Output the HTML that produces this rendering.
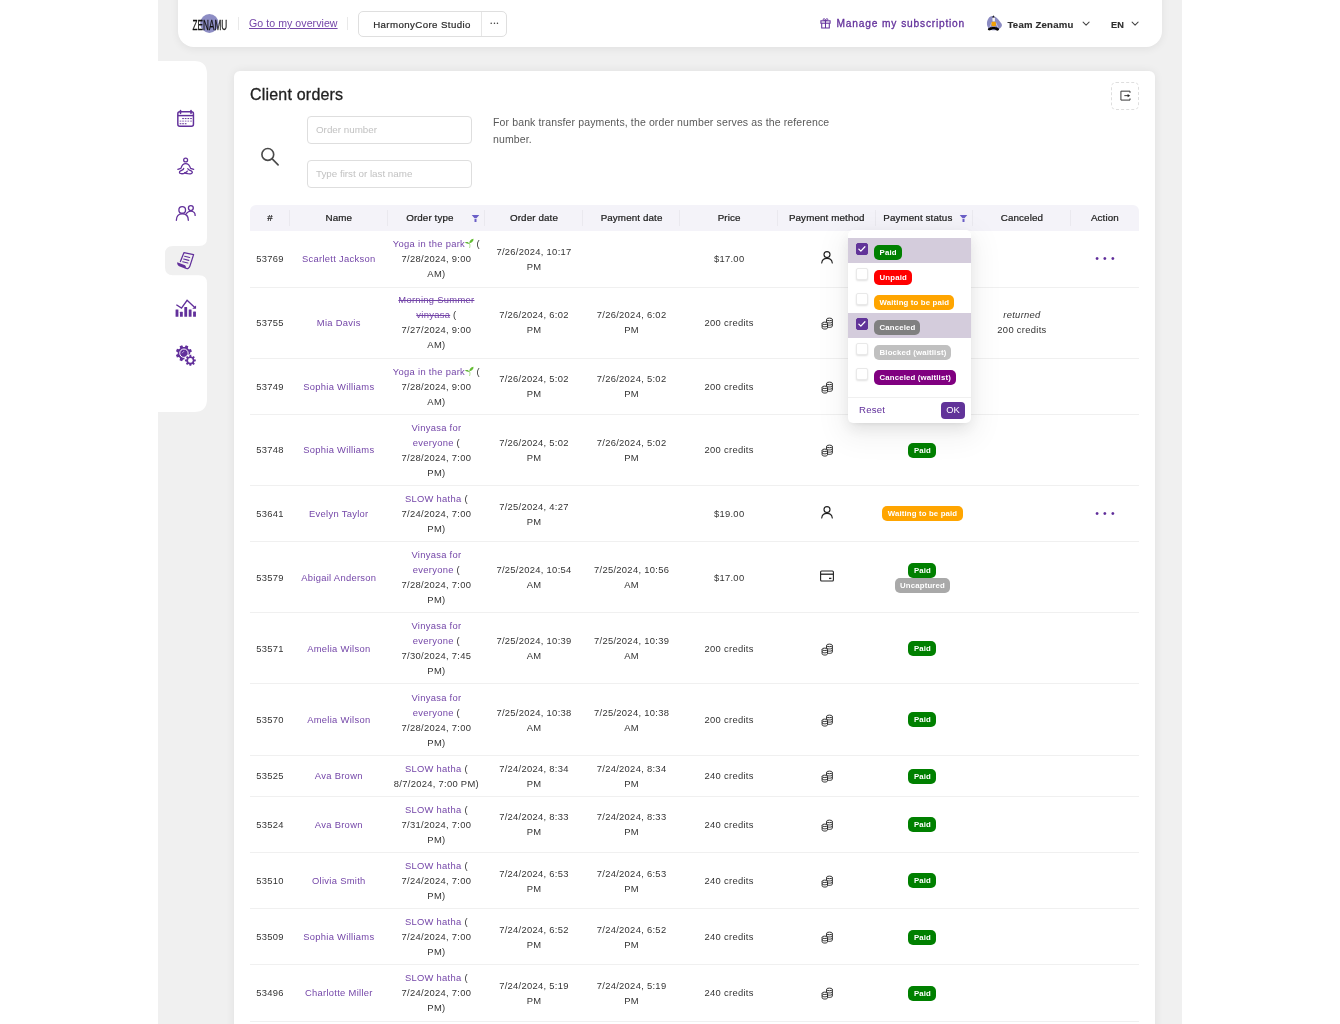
<!DOCTYPE html>
<html lang="en">
<head>
<meta charset="utf-8">
<title>Client orders</title>
<style>
*{box-sizing:border-box}
html,body{margin:0;padding:0;background:#fff}
body{width:1340px;height:1024px;overflow:hidden;position:relative;font-family:"Liberation Sans",sans-serif;font-size:10px;color:#333;-webkit-font-smoothing:antialiased}
a{color:#7446a8;text-decoration:none}
.appbg{position:absolute;left:158px;top:0;width:1024px;height:1024px;background:#f0f0f0}
.app{position:absolute;left:158px;top:0;width:1024px;height:1024px;overflow:hidden;will-change:transform}
/* header */
.hdr{position:absolute;left:20px;top:-20px;width:984px;height:67px;background:#fff;border-radius:0 0 16px 16px;box-shadow:0 2px 8px rgba(0,0,0,.065)}
.hdr .abs{position:absolute}
.vsep{position:absolute;top:37px;width:1px;height:13px;background:#e9e9e9}
.ovl{position:absolute;left:71px;top:36.2px;text-underline-offset:1.2px;text-decoration-thickness:1px;font-size:10.6px;line-height:14px;color:#7446a8;text-decoration:underline;letter-spacing:.05px}
.studio{position:absolute;left:180px;top:31px;width:149px;height:26px;border:1px solid #dfdfdf;border-radius:5px;background:#fff}
.studio .nm{position:absolute;left:0;top:0;width:123px;height:24px;line-height:25.4px;text-align:center;padding-left:4px;font-size:9.7px;letter-spacing:.4px;color:#2a2a2a;border-right:1px solid #e6e6e6;-webkit-text-stroke:.2px #2a2a2a}
.studio .dots{position:absolute;left:123px;top:0;width:25px;height:24px;line-height:23px;text-align:center;font-size:5.5px;color:#444;letter-spacing:1.3px;padding-left:1px}
.sub{position:absolute;left:658.6px;top:36.7px;font-size:10.2px;line-height:14px;font-weight:500;color:#62309b;letter-spacing:.78px;word-spacing:.4px;white-space:nowrap;-webkit-text-stroke:.3px #62309b}
.team{position:absolute;left:829.5px;top:38.3px;font-size:9.6px;letter-spacing:.2px;line-height:14px;font-weight:700;color:#2f2f2f;white-space:nowrap;-webkit-text-stroke:.15px #2f2f2f}
.lang{position:absolute;left:933px;top:38.3px;font-size:9.2px;line-height:14px;font-weight:700;color:#2f2f2f;-webkit-text-stroke:.15px #2f2f2f}
/* sidebar */
.side{position:absolute;left:0;top:61px;width:49px;height:351px}
.side .w{position:absolute;left:0;width:49px;background:#fff}
.side svg{position:absolute}
/* card */
.card{position:absolute;left:76px;top:71px;width:921px;height:1000px;background:#fff;border-radius:6px;box-shadow:0 0 10px rgba(0,0,0,.07)}
.title{position:absolute;left:16px;top:14px;font-size:16px;line-height:20px;font-weight:500;color:#222;letter-spacing:.2px;white-space:nowrap;-webkit-text-stroke:.3px #222}
.exp{position:absolute;left:877px;top:11px;width:28px;height:28px;border:1px dashed #dedede;border-radius:5px}
.inp{position:absolute;left:73px;width:164.5px;height:27.5px;border:1px solid #dedede;border-radius:4px;padding-left:8px;line-height:25.5px;font-size:9.8px;color:#c2c2c2}
.note{position:absolute;left:259px;top:43px;width:360px;font-size:10.5px;line-height:16.5px;color:#595959;letter-spacing:.13px}

/* table */
.tb{position:absolute;left:16px;top:133.8px;width:889px;border-collapse:separate;border-spacing:0;table-layout:fixed;font-size:9.4px;letter-spacing:.3px;line-height:15px;color:#333}
.tb th{position:relative;height:26.5px;padding:0 4px 2px;background:#f4f3f9;font-weight:500;color:#222;text-align:center;white-space:nowrap;font-size:9.8px;letter-spacing:.12px;-webkit-text-stroke:.22px #222}
.tb th.f{padding-right:17px}
.tb th:first-child{border-radius:6px 0 0 0}
.tb th:last-child{border-radius:0 6px 0 0}
.tb th:not(:last-child):after{content:"";position:absolute;right:0;top:5px;width:1px;height:16px;background:#eae9ef}
.tb td{padding:5.1px 2px 5.08px;border-bottom:1px solid #f0f0f0;text-align:center;vertical-align:middle;white-space:nowrap}
.tb tbody tr:nth-child(1) td{padding-top:4.9px;padding-bottom:5.88px}
.tb tbody tr:nth-child(2) td{padding-top:4.3px;padding-bottom:5.28px}
.tb a{color:#7446a8}
.tb s{text-decoration:line-through}
.fun{position:absolute;right:5px;top:9px}
.seed{display:inline-block;vertical-align:-1px;margin:0 0 0 -1.5px}
.pm{display:inline-block;vertical-align:middle}
.bdg{display:inline-block;height:15px;line-height:15px;padding:0 5.6px;border-radius:5px;color:#fff;font-weight:700;font-size:7.8px;letter-spacing:.15px;vertical-align:top;white-space:nowrap}
.act{display:inline-block;color:#5f2d9a;font-size:10.5px;letter-spacing:4.2px;margin-right:-4.2px;position:relative;top:-.5px}
.pm.pp{position:relative;top:-2.6px}
.pm.pc{position:relative;top:-2px}
.pm.pk{position:relative;top:-.1px;left:.8px}
.tb td .bdg{margin-right:4px;padding:0 5.3px 0 5.6px;position:relative;top:.4px}

/* dropdown */
.dd{position:absolute;left:614px;top:159px;width:123px;height:193px;background:#fff;border-radius:5px;box-shadow:0 3px 6px -4px rgba(0,0,0,.12),0 6px 16px rgba(0,0,0,.08),0 9px 28px 8px rgba(0,0,0,.05)}
.dd .it{position:absolute;left:0;width:123px;height:25px}
.dd .it.sel{background:#d4ccdc}
.dd .cb{position:absolute;left:8px;top:4.5px;width:12.4px;height:12.4px;border-radius:2px;background:#fff;border:1px solid #e9e9e9;box-shadow:0 1px 2px rgba(0,0,0,.12)}
.dd .sel .cb{background:#613399;border-color:#613399;box-shadow:none}
.dd .cb svg{position:absolute;left:0;top:0}
.dd .bdg{position:absolute;left:26px;top:6.500px;padding:0 4.9px 0 5.6px}
.dd .ft{position:absolute;left:0;top:166.500px;width:123px;height:26.500px;border-top:1px solid #f0f0f0}
.dd .rs{position:absolute;left:11px;top:6.6px;font-size:9.6px;line-height:12px;color:#5f2d9a;letter-spacing:.2px}
.dd .ok{position:absolute;left:93px;top:4.3px;width:24.2px;height:16.800px;border-radius:4px;background:#613399;color:#fff;font-size:9.4px;line-height:16.500px;text-align:center;font-weight:500}
</style>
</head>
<body>
<div class="appbg"></div>
<div class="app">
  <div class="hdr">
    <!--LOGO:0--><svg style="position:absolute;left:7px;top:25px" width="60" height="36" viewBox="0 0 60 36"><ellipse cx="24.4" cy="18.4" rx="9.2" ry="9.5" fill="#8d8dc4"/><text x="7.6" y="25.4" font-family="Liberation Sans, sans-serif" font-size="15.4" fill="#111" stroke="#111" stroke-width=".3" textLength="34.600" lengthAdjust="spacingAndGlyphs">ZENAMU</text></svg><!--LOGO:1-->
    <div class="vsep" style="left:60px"></div>
    <span class="ovl">Go to my overview</span>
    <div class="vsep" style="left:169px"></div>
    <div class="studio"><div class="nm">HarmonyCore Studio</div><div class="dots">•••</div></div>
    <!--GIFT:0--><svg style="position:absolute;left:641px;top:37px" width="13" height="13" viewBox="0 0 13 13"><g fill="none" stroke="#62309b" stroke-width="1.05"><rect x="1.9" y="3.800" width="9.200" height="2.400"/><path d="M2.700 6.200V11H10.300V6.200M6.500 3.800V11"/><path d="M6.500 3.700C5 3.700 3.900 3 4.300 2 4.800 1 6.300 1.700 6.500 3.700C6.700 1.700 8.200 1 8.700 2 9.100 3 8 3.700 6.500 3.700Z" stroke-width=".9"/></g></svg><!--GIFT:1-->
    <span class="sub">Manage my subscription</span>
    <!--AVATAR:0--><svg style="position:absolute;left:802px;top:30px" width="30" height="26" viewBox="0 0 1182 1024"><path d="M500 235C620 250 700 330 770 430C830 510 880 560 862 620C840 700 740 790 560 800C400 805 290 720 275 560C262 400 360 225 500 235Z" fill="#8b8bc2"/><path d="M470 485L385 690M615 485L705 690" stroke="#eeeef6" stroke-width="22" fill="none"/><path d="M488 310C488 290 590 290 592 310L585 455H495Z" fill="#f6f4f4"/><path d="M527 210L580 300H478Z" fill="#1a1a1a"/><rect x="455" y="465" width="172" height="178" rx="42" fill="#f2a005"/><path d="M310 770C300 700 420 665 535 665C650 665 765 700 750 770C740 820 670 825 640 800C600 770 570 760 530 760C480 760 440 790 400 800C360 810 315 800 310 770Z" fill="#050505"/></svg><!--AVATAR:1-->
    <span class="team">Team Zenamu</span>
    <span class="lang">EN</span>
    <!--CHEVS:0--><svg style="position:absolute;left:903.5999999999999px;top:41.3px" width="8.2" height="5.5" viewBox="0 0 9 6"><path d="M1.200 1.200L4.500 4.500L7.800 1.200" fill="none" stroke="#444" stroke-width="1.100" stroke-linecap="round" stroke-linejoin="round"/></svg><svg style="position:absolute;left:953.2px;top:41.3px" width="8.2" height="5.5" viewBox="0 0 9 6"><path d="M1.200 1.200L4.500 4.500L7.800 1.200" fill="none" stroke="#444" stroke-width="1.100" stroke-linecap="round" stroke-linejoin="round"/></svg><!--CHEVS:1-->
  </div>
  <div class="side">
    <svg style="position:absolute;left:0;top:0" width="49" height="352" viewBox="0 0 49 352"><path d="M0 0H36Q49 0 49 13V177Q49 185 41 185H15Q7 185 7 193V206.300Q7 214.300 15 214.300H41Q49 214.300 49 222.300V338Q49 351 36 351H0Z" fill="#fff"/></svg>
    <!--SIDEICONS:0--><svg style="position:absolute;left:2px;top:34px" width="50" height="50" viewBox="0 0 1024 1024"><g fill="none" stroke="#62309b" stroke-width="30" stroke-linecap="round"><rect x="365" y="345" width="320" height="295" rx="40"/><path d="M365 422H685" stroke-linecap="butt"/><path d="M420 318V375M635 318V375" stroke-width="34"/></g><rect x="455" y="471" width="34" height="22" fill="#62309b" opacity="0.95"/><rect x="508" y="471" width="34" height="22" fill="#62309b" opacity="0.95"/><rect x="563" y="471" width="34" height="22" fill="#62309b" opacity="0.95"/><rect x="618" y="471" width="34" height="22" fill="#62309b" opacity="0.95"/><rect x="403" y="524" width="34" height="22" fill="#62309b" opacity="0.7"/><rect x="455" y="524" width="34" height="22" fill="#62309b" opacity="0.7"/><rect x="508" y="524" width="34" height="22" fill="#62309b" opacity="0.7"/><rect x="563" y="524" width="34" height="22" fill="#62309b" opacity="0.7"/><rect x="618" y="524" width="34" height="22" fill="#62309b" opacity="0.7"/><rect x="403" y="577" width="34" height="22" fill="#62309b" opacity="0.95"/><rect x="455" y="577" width="34" height="22" fill="#62309b" opacity="0.95"/><rect x="508" y="577" width="34" height="22" fill="#62309b" opacity="0.95"/></svg>
<svg style="position:absolute;left:2px;top:79px" width="50" height="50" viewBox="0 0 1024 1024"><g fill="none" stroke="#62309b" stroke-width="26" stroke-linecap="round" stroke-linejoin="round"><circle cx="525" cy="410" r="40"/><path d="M365 602L428 580C445 520 468 482 525 482C582 482 608 520 626 580L690 602"/><path d="M486 580C482 622 425 618 402 650C385 688 440 696 480 688C520 680 545 655 560 636"/><path d="M570 585C580 622 640 620 660 652C672 690 620 696 572 690C545 686 522 680 506 668"/></g></svg>
<svg style="position:absolute;left:2px;top:127px" width="50" height="50" viewBox="0 0 1024 1024"><g fill="none" stroke="#62309b" stroke-width="27" stroke-linecap="round"><circle cx="455" cy="448" r="68"/><path d="M335 662C335 580 385 528 455 528C530 528 580 580 580 662"/><circle cx="632" cy="412" r="50"/><path d="M542 522C565 490 595 472 632 472C690 472 720 520 720 562"/></g></svg>
<svg style="position:absolute;left:2px;top:175px" width="50" height="50" viewBox="0 0 1024 1024"><g fill="none" stroke="#62309b" stroke-width="26" stroke-linejoin="round" stroke-linecap="round"><path d="M418 522L490 342L688 382L612 618C600 660 560 682 520 655"/><path d="M505 415L608 440M485 472L590 498M465 528L570 553" stroke-width="24"/></g><path d="M352 540L512 600C540 625 535 655 512 668L392 622C360 606 348 575 352 540Z" fill="#62309b"/></svg>
<svg style="position:absolute;left:2px;top:223px" width="50" height="50" viewBox="0 0 1024 1024"><rect x="319" y="520" width="58" height="152" rx="8" fill="#62309b"/><rect x="409" y="570" width="58" height="102" rx="8" fill="#62309b"/><rect x="498" y="470" width="58" height="202" rx="8" fill="#62309b"/><rect x="588" y="520" width="58" height="152" rx="8" fill="#62309b"/><rect x="678" y="565" width="58" height="107" rx="8" fill="#62309b"/><path d="M335 425L440 495L555 335L712 482" fill="none" stroke="#62309b" stroke-width="28" stroke-linejoin="miter"/><path d="M738 440V508H660Z" fill="#62309b"/></svg>
<svg style="position:absolute;left:2px;top:270px" width="50" height="50" viewBox="0 0 1024 1024"><path d="M592 378 L633 367 L654 418 L617 439 L617 473 L653 494 L632 545 L591 534 L567 557 L578 598 L527 619 L506 582 L472 582 L451 618 L400 597 L411 556 L388 532 L347 543 L326 492 L363 471 L363 437 L327 416 L348 365 L389 376 L413 353 L402 312 L453 291 L474 328 L508 328 L529 292 L580 313 L569 354Z" fill="#62309b"/><circle cx="490" cy="455" r="86" fill="none" stroke="#fff" stroke-width="20"/><path d="M455 450L490 415" stroke="#fff" stroke-width="14" stroke-linecap="round" opacity=".8"/><circle cx="622" cy="603" r="128" fill="#fff"/><path d="M703 582 L733 585 L733 621 L703 624 L694 646 L713 669 L688 694 L665 675 L643 684 L640 714 L604 714 L601 684 L579 675 L556 694 L531 669 L550 646 L541 624 L511 621 L511 585 L541 582 L550 560 L531 537 L556 512 L579 531 L601 522 L604 492 L640 492 L643 522 L665 531 L688 512 L713 537 L694 560Z" fill="#62309b"/><circle cx="622" cy="603" r="48" fill="#fff"/></svg><!--SIDEICONS:1-->
  </div>
  <div class="card">
    <div class="title">Client orders</div>
    <div class="exp"><!--EXPICON:0--><svg style="position:absolute;left:0;top:0" width="26" height="26" viewBox="0 0 28 28"><g fill="none" stroke="#333" stroke-width="1.05" stroke-linejoin="miter"><path d="M19.400 10.600V8.800H9.600V18.400H19.400V16.600"/><path d="M13.300 13.600H18"/></g><path d="M16.800 11.800L19.600 13.600L16.800 15.400Z" fill="#222"/></svg><!--EXPICON:1--></div>
    <!--SEARCHICON:0--><svg style="position:absolute;left:16px;top:65px" width="40" height="40" viewBox="0 0 40 40"><g fill="none" stroke="#4a4a4a" stroke-width="1.650" stroke-linecap="round"><circle cx="17.800" cy="18.400" r="5.900"/><path d="M22.200 22.900L28.100 28.800"/></g></svg><!--SEARCHICON:1-->
    <div class="inp" style="top:45px">Order number</div>
    <div class="inp" style="top:89px">Type first or last name</div>
    <div class="note">For bank transfer payments, the order number serves as the reference number.</div>
    <!--TB0-->
<table class="tb"><colgroup><col style="width:40px"><col style="width:97.6px"><col style="width:97.6px"><col style="width:97.6px"><col style="width:97.6px"><col style="width:97.6px"><col style="width:97.6px"><col style="width:97.6px"><col style="width:97.6px"><col style="width:68.2px"></colgroup>
<thead><tr><th>#</th><th>Name</th><th class="f">Order type<svg class="fun" viewBox="0 0 10 10" width="9" height="9"><path d="M.8 1h8.400L6.100 4.800H3.900zM3.900 5.500h2.200V8.800H3.900z" fill="#6b5fc7"/></svg></th><th>Order date</th><th>Payment date</th><th>Price</th><th>Payment method</th><th class="f">Payment status<svg class="fun" viewBox="0 0 10 10" width="9" height="9"><path d="M.8 1h8.400L6.100 4.800H3.900zM3.900 5.500h2.200V8.800H3.900z" fill="#6b5fc7"/></svg></th><th>Canceled</th><th>Action</th></tr></thead><tbody>
<tr><td>53769</td><td><a>Scarlett Jackson</a></td><td><a>Yoga in the park</a><svg class="seed" viewBox="0 0 12 12" width="10" height="10"><path d="M6.4 6.6C4.6 7.200 2.400 6.600 1 5.400 2.800 4.200 5.400 4.600 6.400 6.600z" fill="#58b02c"/><path d="M6.500 6.200C6.100 3.800 8 1.200 11.400 0.800 11.600 3.600 9.500 6 6.500 6.200z" fill="#64bd33"/><path d="M6.500 6.200c.9 1.600.8 3.400.3 5.200" stroke="#9bd67a" stroke-width="1.100" fill="none" stroke-linecap="round"/></svg> (<br>7/28/2024, 9:00<br>AM)</td><td>7/26/2024, 10:17<br>PM</td><td></td><td>$17.00</td><td><svg class="pm pp" viewBox="0 0 14 14" width="14" height="14"><circle cx="7" cy="4.6" r="3" fill="none" stroke="#222" stroke-width="1.15"/><path d="M1.7 13c.4-3 2.5-4.6 5.3-4.6s4.9 1.6 5.3 4.6" fill="none" stroke="#222" stroke-width="1.15" stroke-linecap="round"/></svg></td><td><span class="bdg" style="background:#008000">Paid</span></td><td></td><td><span class="act">•••</span></td></tr>
<tr><td>53755</td><td><a>Mia Davis</a></td><td><a><s>Morning Summer<br>vinyasa</s></a> (<br>7/27/2024, 9:00<br>AM)</td><td>7/26/2024, 6:02<br>PM</td><td>7/26/2024, 6:02<br>PM</td><td>200 credits</td><td><svg class="pm pk" viewBox="0 0 14 14" width="13" height="13"><g fill="#fff" stroke="#222" stroke-width="1"><path d="M6 2.6v7.2c0 .8 1.4 1.4 3.1 1.4s3.100-.6 3.100-1.400V2.600"/><ellipse cx="9.1" cy="2.600" rx="3.100" ry="1.400"/><path d="M6 5c0 .8 1.400 1.400 3.100 1.400s3.100-.6 3.100-1.400M6 7.400c0 .8 1.400 1.400 3.100 1.400s3.100-.6 3.100-1.400" fill="none"/><path d="M1.200 6.800v4.800c0 .8 1.300 1.400 2.900 1.400S7 12.400 7 11.600V6.800"/><ellipse cx="4.100" cy="6.800" rx="2.900" ry="1.300"/><path d="M1.200 9.200c0 .8 1.300 1.400 2.900 1.400S7 10 7 9.200" fill="none"/></g></svg></td><td><span class="bdg" style="background:#808080">Canceled</span></td><td><i>returned</i><br>200 credits</td><td></td></tr>
<tr><td>53749</td><td><a>Sophia Williams</a></td><td><a>Yoga in the park</a><svg class="seed" viewBox="0 0 12 12" width="10" height="10"><path d="M6.4 6.6C4.6 7.200 2.400 6.600 1 5.400 2.800 4.200 5.400 4.600 6.400 6.600z" fill="#58b02c"/><path d="M6.500 6.200C6.100 3.800 8 1.200 11.400 0.800 11.600 3.600 9.500 6 6.500 6.200z" fill="#64bd33"/><path d="M6.500 6.200c.9 1.600.8 3.400.3 5.200" stroke="#9bd67a" stroke-width="1.100" fill="none" stroke-linecap="round"/></svg> (<br>7/28/2024, 9:00<br>AM)</td><td>7/26/2024, 5:02<br>PM</td><td>7/26/2024, 5:02<br>PM</td><td>200 credits</td><td><svg class="pm pk" viewBox="0 0 14 14" width="13" height="13"><g fill="#fff" stroke="#222" stroke-width="1"><path d="M6 2.6v7.2c0 .8 1.4 1.4 3.1 1.4s3.100-.6 3.100-1.400V2.600"/><ellipse cx="9.1" cy="2.600" rx="3.100" ry="1.400"/><path d="M6 5c0 .8 1.400 1.400 3.100 1.400s3.100-.6 3.100-1.400M6 7.400c0 .8 1.400 1.400 3.100 1.400s3.100-.6 3.100-1.400" fill="none"/><path d="M1.200 6.800v4.800c0 .8 1.300 1.400 2.900 1.400S7 12.400 7 11.600V6.800"/><ellipse cx="4.100" cy="6.800" rx="2.900" ry="1.300"/><path d="M1.200 9.200c0 .8 1.300 1.400 2.900 1.400S7 10 7 9.200" fill="none"/></g></svg></td><td><span class="bdg" style="background:#008000">Paid</span></td><td></td><td></td></tr>
<tr><td>53748</td><td><a>Sophia Williams</a></td><td><a>Vinyasa for<br>everyone</a> (<br>7/28/2024, 7:00<br>PM)</td><td>7/26/2024, 5:02<br>PM</td><td>7/26/2024, 5:02<br>PM</td><td>200 credits</td><td><svg class="pm pk" viewBox="0 0 14 14" width="13" height="13"><g fill="#fff" stroke="#222" stroke-width="1"><path d="M6 2.6v7.2c0 .8 1.4 1.4 3.1 1.4s3.100-.6 3.100-1.400V2.600"/><ellipse cx="9.1" cy="2.600" rx="3.100" ry="1.400"/><path d="M6 5c0 .8 1.400 1.400 3.100 1.400s3.100-.6 3.100-1.400M6 7.400c0 .8 1.400 1.400 3.100 1.400s3.100-.6 3.100-1.400" fill="none"/><path d="M1.200 6.800v4.800c0 .8 1.300 1.400 2.900 1.400S7 12.400 7 11.600V6.800"/><ellipse cx="4.100" cy="6.800" rx="2.900" ry="1.300"/><path d="M1.200 9.200c0 .8 1.300 1.400 2.900 1.400S7 10 7 9.200" fill="none"/></g></svg></td><td><span class="bdg" style="background:#008000">Paid</span></td><td></td><td></td></tr>
<tr><td>53641</td><td><a>Evelyn Taylor</a></td><td><a>SLOW hatha</a> (<br>7/24/2024, 7:00<br>PM)</td><td>7/25/2024, 4:27<br>PM</td><td></td><td>$19.00</td><td><svg class="pm pp" viewBox="0 0 14 14" width="14" height="14"><circle cx="7" cy="4.6" r="3" fill="none" stroke="#222" stroke-width="1.15"/><path d="M1.7 13c.4-3 2.5-4.6 5.3-4.6s4.9 1.6 5.3 4.6" fill="none" stroke="#222" stroke-width="1.15" stroke-linecap="round"/></svg></td><td><span class="bdg" style="background:#ffa500">Waiting to be paid</span></td><td></td><td><span class="act">•••</span></td></tr>
<tr><td>53579</td><td><a>Abigail Anderson</a></td><td><a>Vinyasa for<br>everyone</a> (<br>7/28/2024, 7:00<br>PM)</td><td>7/25/2024, 10:54<br>AM</td><td>7/25/2024, 10:56<br>AM</td><td>$17.00</td><td><svg class="pm pc" viewBox="0 0 16 14" width="16" height="14"><rect x="1.6" y="2" width="12.800" height="10" rx="1" fill="none" stroke="#222" stroke-width="1.1"/><path d="M1.600 5.200h12.800" stroke="#222" stroke-width="1.300"/><path d="M10 9.400h2.400" stroke="#222" stroke-width="1.300"/></svg></td><td><span class="bdg" style="background:#008000">Paid</span><br><span class="bdg" style="background:#a9a9a9">Uncaptured</span></td><td></td><td></td></tr>
<tr><td>53571</td><td><a>Amelia Wilson</a></td><td><a>Vinyasa for<br>everyone</a> (<br>7/30/2024, 7:45<br>PM)</td><td>7/25/2024, 10:39<br>AM</td><td>7/25/2024, 10:39<br>AM</td><td>200 credits</td><td><svg class="pm pk" viewBox="0 0 14 14" width="13" height="13"><g fill="#fff" stroke="#222" stroke-width="1"><path d="M6 2.6v7.2c0 .8 1.4 1.4 3.1 1.4s3.100-.6 3.100-1.400V2.600"/><ellipse cx="9.1" cy="2.600" rx="3.100" ry="1.400"/><path d="M6 5c0 .8 1.400 1.400 3.100 1.400s3.100-.6 3.100-1.400M6 7.400c0 .8 1.400 1.400 3.100 1.400s3.100-.6 3.100-1.400" fill="none"/><path d="M1.200 6.800v4.800c0 .8 1.300 1.400 2.900 1.400S7 12.400 7 11.600V6.800"/><ellipse cx="4.100" cy="6.800" rx="2.900" ry="1.300"/><path d="M1.200 9.200c0 .8 1.300 1.400 2.900 1.400S7 10 7 9.200" fill="none"/></g></svg></td><td><span class="bdg" style="background:#008000">Paid</span></td><td></td><td></td></tr>
<tr><td>53570</td><td><a>Amelia Wilson</a></td><td><a>Vinyasa for<br>everyone</a> (<br>7/28/2024, 7:00<br>PM)</td><td>7/25/2024, 10:38<br>AM</td><td>7/25/2024, 10:38<br>AM</td><td>200 credits</td><td><svg class="pm pk" viewBox="0 0 14 14" width="13" height="13"><g fill="#fff" stroke="#222" stroke-width="1"><path d="M6 2.6v7.2c0 .8 1.4 1.4 3.1 1.4s3.100-.6 3.100-1.400V2.600"/><ellipse cx="9.1" cy="2.600" rx="3.100" ry="1.400"/><path d="M6 5c0 .8 1.400 1.400 3.100 1.400s3.100-.6 3.100-1.400M6 7.400c0 .8 1.400 1.400 3.100 1.400s3.100-.6 3.100-1.400" fill="none"/><path d="M1.200 6.800v4.800c0 .8 1.300 1.400 2.900 1.400S7 12.400 7 11.600V6.800"/><ellipse cx="4.100" cy="6.800" rx="2.900" ry="1.300"/><path d="M1.200 9.200c0 .8 1.300 1.400 2.900 1.400S7 10 7 9.200" fill="none"/></g></svg></td><td><span class="bdg" style="background:#008000">Paid</span></td><td></td><td></td></tr>
<tr><td>53525</td><td><a>Ava Brown</a></td><td><a>SLOW hatha</a> (<br>8/7/2024, 7:00 PM)</td><td>7/24/2024, 8:34<br>PM</td><td>7/24/2024, 8:34<br>PM</td><td>240 credits</td><td><svg class="pm pk" viewBox="0 0 14 14" width="13" height="13"><g fill="#fff" stroke="#222" stroke-width="1"><path d="M6 2.6v7.2c0 .8 1.4 1.4 3.1 1.4s3.100-.6 3.100-1.400V2.600"/><ellipse cx="9.1" cy="2.600" rx="3.100" ry="1.400"/><path d="M6 5c0 .8 1.400 1.400 3.100 1.400s3.100-.6 3.100-1.400M6 7.400c0 .8 1.400 1.400 3.100 1.400s3.100-.6 3.100-1.400" fill="none"/><path d="M1.200 6.800v4.800c0 .8 1.300 1.400 2.900 1.400S7 12.400 7 11.600V6.800"/><ellipse cx="4.100" cy="6.800" rx="2.900" ry="1.300"/><path d="M1.200 9.200c0 .8 1.300 1.400 2.900 1.400S7 10 7 9.200" fill="none"/></g></svg></td><td><span class="bdg" style="background:#008000">Paid</span></td><td></td><td></td></tr>
<tr><td>53524</td><td><a>Ava Brown</a></td><td><a>SLOW hatha</a> (<br>7/31/2024, 7:00<br>PM)</td><td>7/24/2024, 8:33<br>PM</td><td>7/24/2024, 8:33<br>PM</td><td>240 credits</td><td><svg class="pm pk" viewBox="0 0 14 14" width="13" height="13"><g fill="#fff" stroke="#222" stroke-width="1"><path d="M6 2.6v7.2c0 .8 1.4 1.4 3.1 1.4s3.100-.6 3.100-1.400V2.600"/><ellipse cx="9.1" cy="2.600" rx="3.100" ry="1.400"/><path d="M6 5c0 .8 1.400 1.400 3.100 1.400s3.100-.6 3.100-1.400M6 7.400c0 .8 1.400 1.400 3.100 1.400s3.100-.6 3.100-1.400" fill="none"/><path d="M1.200 6.800v4.800c0 .8 1.300 1.400 2.900 1.400S7 12.400 7 11.600V6.800"/><ellipse cx="4.100" cy="6.800" rx="2.900" ry="1.300"/><path d="M1.200 9.200c0 .8 1.300 1.400 2.900 1.400S7 10 7 9.200" fill="none"/></g></svg></td><td><span class="bdg" style="background:#008000">Paid</span></td><td></td><td></td></tr>
<tr><td>53510</td><td><a>Olivia Smith</a></td><td><a>SLOW hatha</a> (<br>7/24/2024, 7:00<br>PM)</td><td>7/24/2024, 6:53<br>PM</td><td>7/24/2024, 6:53<br>PM</td><td>240 credits</td><td><svg class="pm pk" viewBox="0 0 14 14" width="13" height="13"><g fill="#fff" stroke="#222" stroke-width="1"><path d="M6 2.6v7.2c0 .8 1.4 1.4 3.1 1.4s3.100-.6 3.100-1.400V2.600"/><ellipse cx="9.1" cy="2.600" rx="3.100" ry="1.400"/><path d="M6 5c0 .8 1.400 1.400 3.100 1.400s3.100-.6 3.100-1.400M6 7.400c0 .8 1.400 1.400 3.100 1.400s3.100-.6 3.100-1.400" fill="none"/><path d="M1.200 6.800v4.800c0 .8 1.300 1.400 2.900 1.400S7 12.400 7 11.600V6.800"/><ellipse cx="4.100" cy="6.800" rx="2.900" ry="1.300"/><path d="M1.200 9.200c0 .8 1.300 1.400 2.900 1.400S7 10 7 9.200" fill="none"/></g></svg></td><td><span class="bdg" style="background:#008000">Paid</span></td><td></td><td></td></tr>
<tr><td>53509</td><td><a>Sophia Williams</a></td><td><a>SLOW hatha</a> (<br>7/24/2024, 7:00<br>PM)</td><td>7/24/2024, 6:52<br>PM</td><td>7/24/2024, 6:52<br>PM</td><td>240 credits</td><td><svg class="pm pk" viewBox="0 0 14 14" width="13" height="13"><g fill="#fff" stroke="#222" stroke-width="1"><path d="M6 2.6v7.2c0 .8 1.4 1.4 3.1 1.4s3.100-.6 3.100-1.400V2.600"/><ellipse cx="9.1" cy="2.600" rx="3.100" ry="1.400"/><path d="M6 5c0 .8 1.400 1.400 3.100 1.400s3.100-.6 3.100-1.400M6 7.400c0 .8 1.400 1.400 3.100 1.400s3.100-.6 3.100-1.400" fill="none"/><path d="M1.200 6.800v4.800c0 .8 1.300 1.400 2.900 1.400S7 12.400 7 11.600V6.800"/><ellipse cx="4.100" cy="6.800" rx="2.900" ry="1.300"/><path d="M1.200 9.200c0 .8 1.300 1.400 2.900 1.400S7 10 7 9.200" fill="none"/></g></svg></td><td><span class="bdg" style="background:#008000">Paid</span></td><td></td><td></td></tr>
<tr><td>53496</td><td><a>Charlotte Miller</a></td><td><a>SLOW hatha</a> (<br>7/24/2024, 7:00<br>PM)</td><td>7/24/2024, 5:19<br>PM</td><td>7/24/2024, 5:19<br>PM</td><td>240 credits</td><td><svg class="pm pk" viewBox="0 0 14 14" width="13" height="13"><g fill="#fff" stroke="#222" stroke-width="1"><path d="M6 2.6v7.2c0 .8 1.4 1.4 3.1 1.4s3.100-.6 3.100-1.400V2.600"/><ellipse cx="9.1" cy="2.600" rx="3.100" ry="1.400"/><path d="M6 5c0 .8 1.400 1.400 3.100 1.400s3.100-.6 3.100-1.400M6 7.400c0 .8 1.400 1.400 3.100 1.400s3.100-.6 3.100-1.400" fill="none"/><path d="M1.200 6.800v4.800c0 .8 1.300 1.400 2.900 1.400S7 12.400 7 11.600V6.800"/><ellipse cx="4.100" cy="6.800" rx="2.900" ry="1.300"/><path d="M1.200 9.200c0 .8 1.300 1.400 2.900 1.400S7 10 7 9.200" fill="none"/></g></svg></td><td><span class="bdg" style="background:#008000">Paid</span></td><td></td><td></td></tr>
</tbody></table>
<!--TB1-->
    <div class="dd">
<div class="it sel" style="top:8.1px"><span class="cb"><svg viewBox="0 0 12 12" width="10" height="10"><path d="M2.2 6.100l2.400 2.500 4.900-5.300" fill="none" stroke="#fff" stroke-width="1.500" stroke-linecap="round" stroke-linejoin="round"/></svg></span><span class="bdg" style="background:#008000">Paid</span></div>
<div class="it" style="top:33.1px"><span class="cb"></span><span class="bdg" style="background:#ff0000">Unpaid</span></div>
<div class="it" style="top:58.1px"><span class="cb"></span><span class="bdg" style="background:#ffa500">Waiting to be paid</span></div>
<div class="it sel" style="top:83.1px"><span class="cb"><svg viewBox="0 0 12 12" width="10" height="10"><path d="M2.2 6.100l2.400 2.500 4.900-5.300" fill="none" stroke="#fff" stroke-width="1.500" stroke-linecap="round" stroke-linejoin="round"/></svg></span><span class="bdg" style="background:#808080">Canceled</span></div>
<div class="it" style="top:108.1px"><span class="cb"></span><span class="bdg" style="background:#c0c0c0">Blocked (waitlist)</span></div>
<div class="it" style="top:133.1px"><span class="cb"></span><span class="bdg" style="background:#800080">Canceled (waitlist)</span></div>
<div class="ft"><span class="rs">Reset</span><span class="ok">OK</span></div>
</div>
  </div>
</div>
</body>
</html>
